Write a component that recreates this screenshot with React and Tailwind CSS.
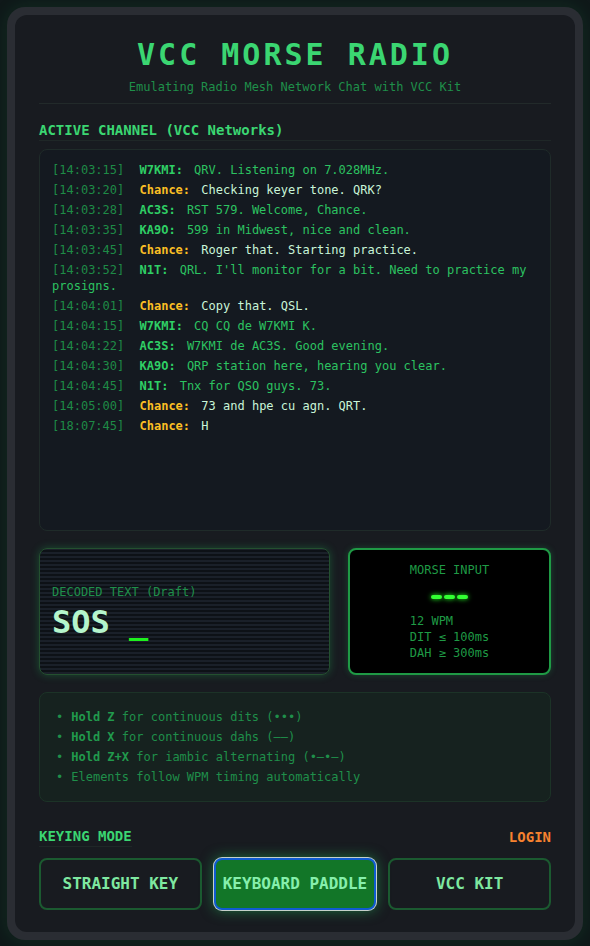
import React from 'react'

const mono = { fontFamily: '"DejaVu Sans Mono", "Liberation Mono", monospace' }

const messages = [
  ['14:03:15', 'W7KMI', 'QRV. Listening on 7.028MHz.'],
  ['14:03:20', 'Chance', 'Checking keyer tone. QRK?'],
  ['14:03:28', 'AC3S', 'RST 579. Welcome, Chance.'],
  ['14:03:35', 'KA9O', '599 in Midwest, nice and clean.'],
  ['14:03:45', 'Chance', 'Roger that. Starting practice.'],
  ['14:03:52', 'N1T', "QRL. I'll monitor for a bit. Need to practice my prosigns."],
  ['14:04:01', 'Chance', 'Copy that. QSL.'],
  ['14:04:15', 'W7KMI', 'CQ CQ de W7KMI K.'],
  ['14:04:22', 'AC3S', 'W7KMI de AC3S. Good evening.'],
  ['14:04:30', 'KA9O', 'QRP station here, hearing you clear.'],
  ['14:04:45', 'N1T', 'Tnx for QSO guys. 73.'],
  ['14:05:00', 'Chance', '73 and hpe cu agn. QRT.'],
  ['18:07:45', 'Chance', 'H'],
]

const tips = [
  ['Hold Z', ' for continuous dits (•••)'],
  ['Hold X', ' for continuous dahs (——)'],
  ['Hold Z+X', ' for iambic alternating (•—•—)'],
  [null, 'Elements follow WPM timing automatically'],
]

function ChatLine({ time, who, text }) {
  const me = who === 'Chance'
  return (
    <div className="text-xs leading-4">
      <span className="mr-2 text-[#1e8a46]">[{time}]</span>{' '}
      <span className={`mr-1 font-bold ${me ? 'text-[#fbbf24]' : 'text-[#2fcf65]'}`}>{who}:</span>{' '}
      <span className={me ? 'font-medium text-[#c9f5d8]' : 'text-[#2cc261]'}>{text}</span>
    </div>
  )
}

export default function App() {
  return (
    <div className="min-h-screen bg-[#0f1819] p-[7px]" style={mono}>
      <div className="rounded-[18px] bg-[#2a2d33] p-2 shadow-[0_0_18px_rgba(34,197,94,0.12)]">
        <div className="rounded-xl bg-[#181b20] px-6 pt-[22px] pb-[22px]">
          {/* Header */}
          <div className="border-b border-[#222a2a] pb-2 text-center">
            <h1 className="text-3xl font-bold tracking-widest text-[#3bd672]">VCC MORSE RADIO</h1>
            <p className="mt-1.5 text-xs text-[#1f8f4a]">Emulating Radio Mesh Network Chat with VCC Kit</p>
          </div>

          {/* Channel */}
          <h2 className="mt-4 border-b border-[#1f2727] text-sm font-bold leading-5 text-[#3bd672]">
            ACTIVE CHANNEL (VCC Networks)
          </h2>
          <div className="mt-2 h-[382px] overflow-hidden rounded-lg border border-[#1f2b29] bg-[#141920] p-3 space-y-1">
            {messages.map(([t, w, m]) => (
              <ChatLine key={t} time={t} who={w} text={m} />
            ))}
          </div>

          {/* Decoder + input */}
          <div className="mt-[17px] grid grid-cols-[1fr_203px] gap-[18px]">
            <div className="flex h-[127px] flex-col justify-center rounded-lg border border-[#24502f] bg-[image:repeating-linear-gradient(0deg,#1a2029_0px,#1a2029_2px,#0d1116_2px,#0d1116_4px)] px-[12px] shadow-[0_0_8px_rgba(34,197,94,0.3)]">
              <div className="text-xs leading-4 text-[#1f8f4a]">DECODED TEXT (Draft)</div>
              <div className="mt-1 text-[32px] font-bold leading-9 text-[#b5f5cc]">
                SOS <span className="text-[#1ef01e]">_</span>
              </div>
            </div>
            <div className="flex h-[127px] justify-center rounded-lg border-2 border-[#1f9a45] bg-black pt-3 shadow-[0_0_6px_rgba(34,197,94,0.25)]">
              <div className="flex flex-col items-start text-xs leading-4 text-[#1f9a45]">
                <div>MORSE INPUT</div>
                <div className="mt-[17px] flex gap-[2px] self-center">
                  <span className="h-[4px] w-[11px] rounded-sm bg-[#33ff33] shadow-[0_0_5px_#22ff22]" />
                  <span className="h-[4px] w-[11px] rounded-sm bg-[#33ff33] shadow-[0_0_5px_#22ff22]" />
                  <span className="h-[4px] w-[11px] rounded-sm bg-[#33ff33] shadow-[0_0_5px_#22ff22]" />
                </div>
                <div className="mt-[14px]">12 WPM</div>
                <div>DIT ≤ 100ms</div>
                <div>DAH ≥ 300ms</div>
              </div>
            </div>
          </div>

          {/* Tips */}
          <div className="mt-[17px] rounded-lg border border-[#1c3327] bg-[#16221f] px-4 py-[14px]">
            {tips.map(([b, rest]) => (
              <div key={rest} className="flex gap-2 text-xs leading-5 text-[#1f8f4a]">
                <span>•</span>
                <span>
                  {b && <b className="text-[#219a4d]">{b}</b>}
                  {rest}
                </span>
              </div>
            ))}
          </div>

          {/* Keying mode */}
          <div className="mt-[24px] flex items-end justify-between">
            <span className="border-b border-[#1f2727] text-sm font-bold leading-5 text-[#3bd672]">KEYING MODE</span>
            <span className="text-sm font-bold leading-5 text-[#f7822f]">LOGIN</span>
          </div>
          <div className="mt-[11px] grid grid-cols-3 gap-3">
            <button className="rounded-lg border-2 border-[#1b5a30] bg-transparent py-3 text-base font-bold leading-6 text-[#7ee8a0]">
              STRAIGHT KEY
            </button>
            <button className="rounded-lg border-2 border-[#0f5bd0] bg-[#127628] py-3 text-base font-bold leading-6 text-[#86efac] shadow-[0_0_0_1px_rgba(255,255,255,0.75),0_0_14px_rgba(34,197,94,0.55)]">
              KEYBOARD PADDLE
            </button>
            <button className="rounded-lg border-2 border-[#1b5a30] bg-transparent py-3 text-base font-bold leading-6 text-[#7ee8a0]">
              VCC KIT
            </button>
          </div>
        </div>
      </div>
    </div>
  )
}
